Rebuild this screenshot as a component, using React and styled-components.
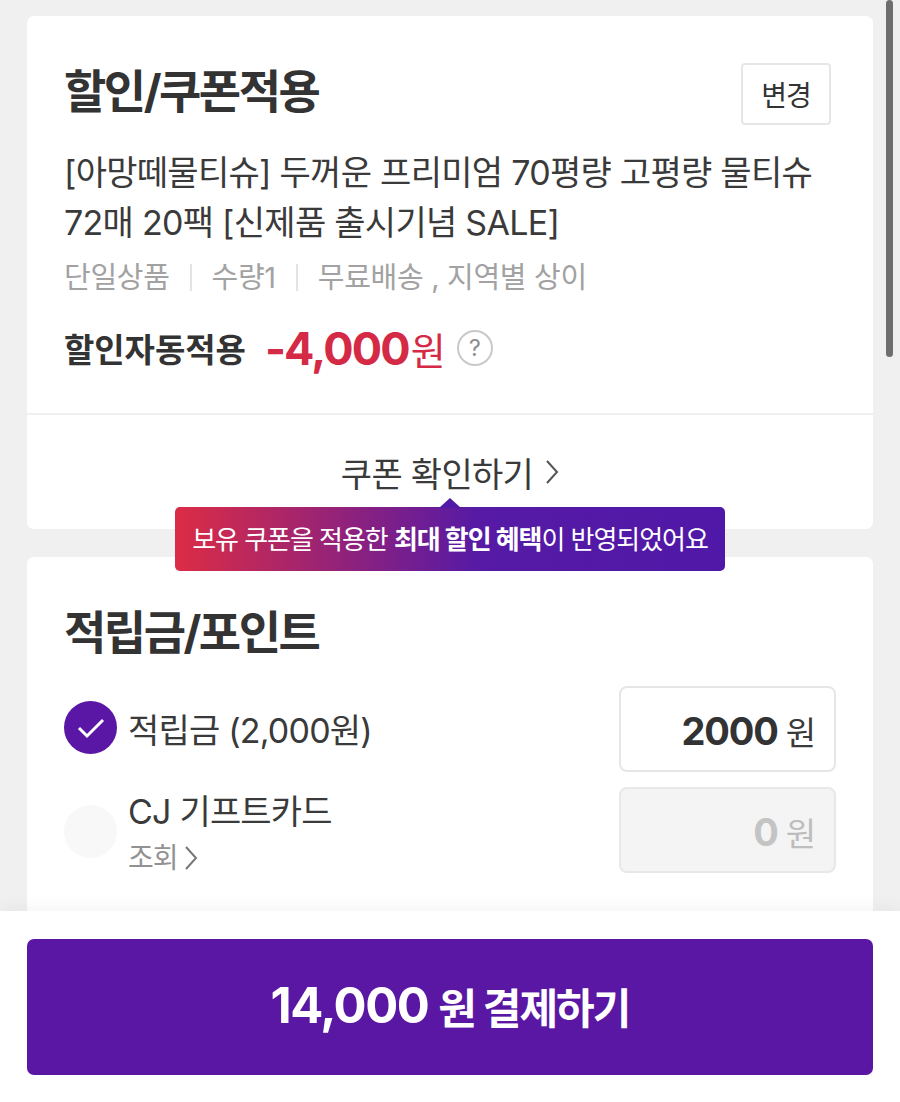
import React from "react";
import styled, { createGlobalStyle } from "styled-components";

const GlobalStyle = createGlobalStyle`
  html, body {
    margin: 0;
    padding: 0;
    background: #f0f0f0;
    overflow: hidden;
  }
  * {
    box-sizing: border-box;
  }
  body {
    font-family: "Inter", "Noto Sans CJK KR", "Noto Sans", sans-serif;
    color: #333;
  }
`;

const Screen = styled.div`
  position: relative;
  width: 900px;
  height: 1102px;
  display: flex;
  flex-direction: column;
  overflow: hidden;
`;
const Scroller = styled.div`
  flex: 1;
  min-height: 0;
  overflow: hidden;
  padding: 16px 27px 0;
  display: flex;
  flex-direction: column;
  gap: 28px;
`;
const ScrollThumb = styled.div`
  position: absolute;
  top: 0;
  right: 7px;
  width: 7px;
  height: 357px;
  border-radius: 4px;
  background: #6e6e6e;
`;
const Card = styled.section`
  position: relative;
  flex-shrink: 0;
  background: #fff;
  border-radius: 7px;
`;
const CardBody = styled.div`
  padding: ${(p) => p.$padding};
`;
const TitleRow = styled.div`
  display: flex;
  justify-content: space-between;
  align-items: flex-start;
`;
const Title = styled.h2`
  margin: 0;
  font-size: 46px;
  line-height: 60px;
  font-weight: 700;
  letter-spacing: -2.5px;
  color: #333;
`;
const ChangeButton = styled.button`
  width: 90px;
  height: 62px;
  margin: 2px 2px 0 0;
  padding: 0;
  background: #fff;
  border: 2px solid #e6e6e6;
  border-radius: 4px;
  font: inherit;
  font-size: 28px;
  letter-spacing: -1px;
  color: #333;
`;
const ProductName = styled.p`
  margin: 23px 0 0;
  font-size: 34px;
  line-height: 50px;
  letter-spacing: -0.72px;
  color: #3a3a3a;
`;
const MetaRow = styled.div`
  display: flex;
  align-items: center;
  margin-top: 4px;
  height: 46px;
  font-size: 29px;
  letter-spacing: -0.3px;
  color: #a2a2a2;
`;
const MetaItem = styled.span`
  & + &::before {
    content: "";
    display: inline-block;
    width: 2px;
    height: 27px;
    margin: 0 20px;
    vertical-align: -3px;
    background: #e4e4e4;
  }
`;
const DiscountRow = styled.div`
  display: flex;
  align-items: center;
  margin-top: 22px;
  height: 56px;
`;
const DiscountLabel = styled.span`
  font-size: 33px;
  font-weight: 700;
  letter-spacing: -0.05px;
  color: #333;
`;
const DiscountValue = styled.span`
  margin-left: 19px;
  font-size: 45px;
  font-weight: 700;
  letter-spacing: -1.8px;
  color: #d42a45;
`;
const DiscountUnit = styled.span`
  margin-left: 2px;
  font-size: 38px;
  font-weight: 400;
`;
const HelpIcon = styled.span`
  display: flex;
  align-items: center;
  justify-content: center;
  width: 36px;
  height: 36px;
  margin-left: 13px;
  border: 2px solid #c9c9c9;
  border-radius: 50%;
  font-size: 23px;
  color: #8c8c8c;
`;
const CouponLink = styled.div`
  display: flex;
  justify-content: center;
  align-items: center;
  gap: 12px;
  height: 116px;
  border-top: 2px solid #f0f0f0;
  font-size: 34px;
  letter-spacing: -0.7px;
  color: #3a3a3a;
`;
const Tooltip = styled.div`
  position: absolute;
  left: 148px;
  top: 491px;
  width: 550px;
  height: 64px;
  display: flex;
  align-items: center;
  justify-content: center;
  padding-bottom: 4px;
  border-radius: 5px;
  background: linear-gradient(90deg, #dc2c45 0%, #561aa5 55%, #5018a8 100%);
  color: #fff;
  font-size: 26px;
  letter-spacing: -1.05px;
  white-space: nowrap;
  z-index: 2;
  &::before {
    content: "";
    position: absolute;
    left: 264px;
    top: -9px;
    border-left: 11px solid transparent;
    border-right: 11px solid transparent;
    border-bottom: 10px solid #511aa6;
  }
  strong {
    font-weight: 700;
  }
`;
const Row = styled.div`
  display: flex;
  align-items: flex-start;
  justify-content: space-between;
  margin-top: ${(p) => p.$top};
`;
const RowLabel = styled.div`
  display: flex;
  align-items: flex-start;
  gap: 11px;
`;
const Radio = styled.span`
  display: flex;
  align-items: center;
  justify-content: center;
  flex-shrink: 0;
  width: 53px;
  height: 53px;
  margin-top: ${(p) => (p.$on ? "15px" : "18px")};
  border-radius: 50%;
  background: ${(p) => (p.$on ? "#5a17a5" : "#f8f8f8")};
`;
const LabelBlock = styled.div`
  margin-top: ${(p) => p.$top};
`;
const LabelText = styled.div`
  font-size: 34px;
  line-height: 48px;
  letter-spacing: -0.8px;
  color: #3a3a3a;
`;
const SubLink = styled.div`
  display: flex;
  align-items: center;
  gap: 6px;
  margin-top: 2px;
  font-size: 28px;
  line-height: 40px;
  letter-spacing: -1px;
  color: #929292;
`;
const AmountBox = styled.div`
  display: flex;
  align-items: baseline;
  justify-content: flex-end;
  gap: 8px;
  width: 217px;
  height: 86px;
  padding: 19px 18px 0 0;
  border: 2px solid ${(p) => (p.$disabled ? "#e8e8e8" : "#e6e6e6")};
  border-radius: 8px;
  background: ${(p) => (p.$disabled ? "#f4f4f4" : "#fff")};
  color: ${(p) => (p.$disabled ? "#c4c4c4" : "#333")};
`;
const AmountValue = styled.span`
  font-size: 38px;
  font-weight: 700;
  letter-spacing: -1.2px;
`;
const AmountUnit = styled.span`
  font-size: 33px;
  color: ${(p) => (p.$disabled ? "#bdbdbd" : "#3a3a3a")};
`;
const Footer = styled.footer`
  flex-shrink: 0;
  height: 191px;
  padding: 28px 27px 0;
  background: #fff;
  box-shadow: 0 -6px 14px rgba(0, 0, 0, 0.035);
  position: relative;
`;
const PayButton = styled.button`
  display: flex;
  align-items: center;
  justify-content: center;
  width: 100%;
  height: 136px;
  padding: 0 0 4px;
  border: 0;
  border-radius: 7px;
  background: #5a17a3;
  color: #fff;
  font: inherit;
  font-size: 42px;
  font-weight: 700;
  letter-spacing: -2px;
`;
const PayAmount = styled.span`
  font-size: 49px;
  letter-spacing: -1.5px;
  margin-right: 10px;
`;

const Chevron = ({ w, h, color }) => (
  <svg width={w} height={h} viewBox="0 0 14 26" fill="none">
    <path d="M2 2l10 11L2 24" stroke={color} strokeWidth="2" />
  </svg>
);

function App() {
  return (
    <Screen>
      <GlobalStyle />
      <Scroller>
        <Card>
          <CardBody $padding="45px 40px 37px 37px">
            <TitleRow>
              <Title>할인/쿠폰적용</Title>
              <ChangeButton>변경</ChangeButton>
            </TitleRow>
            <ProductName>
              [아망떼물티슈] 두꺼운 프리미엄 70평량 고평량 물티슈
              <br />
              72매 20팩 [신제품 출시기념 SALE]
            </ProductName>
            <MetaRow>
              <MetaItem>단일상품</MetaItem>
              <MetaItem>수량1</MetaItem>
              <MetaItem>무료배송 , 지역별 상이</MetaItem>
            </MetaRow>
            <DiscountRow>
              <DiscountLabel>할인자동적용</DiscountLabel>
              <DiscountValue>
                -4,000<DiscountUnit>원</DiscountUnit>
              </DiscountValue>
              <HelpIcon>?</HelpIcon>
            </DiscountRow>
          </CardBody>
          <CouponLink>
            쿠폰 확인하기
            <Chevron w={14} h={26} color="#555" />
          </CouponLink>
          <Tooltip>
            <span>
              보유 쿠폰을 적용한 <strong>최대 할인 혜택</strong>이 반영되었어요
            </span>
          </Tooltip>
        </Card>
        <Card>
          <CardBody $padding="45px 37px 60px 37px">
            <Title>적립금/포인트</Title>
            <Row $top="24px">
              <RowLabel>
                <Radio $on>
                  <svg width="30" height="24" viewBox="0 0 30 24" fill="none">
                    <path d="M3 12l8 8L27 4" stroke="#fff" strokeWidth="3" />
                  </svg>
                </Radio>
                <LabelBlock $top="21px">
                  <LabelText>적립금 (2,000원)</LabelText>
                </LabelBlock>
              </RowLabel>
              <AmountBox>
                <AmountValue>2000</AmountValue>
                <AmountUnit>원</AmountUnit>
              </AmountBox>
            </Row>
            <Row $top="15px">
              <RowLabel>
                <Radio />
                <LabelBlock $top="1px">
                  <LabelText>CJ 기프트카드</LabelText>
                  <SubLink>
                    조회
                    <Chevron w={14} h={26} color="#777" />
                  </SubLink>
                </LabelBlock>
              </RowLabel>
              <AmountBox $disabled>
                <AmountValue>0</AmountValue>
                <AmountUnit $disabled>원</AmountUnit>
              </AmountBox>
            </Row>
          </CardBody>
        </Card>
      </Scroller>
      <Footer>
        <PayButton>
          <PayAmount>14,000</PayAmount> 원 결제하기
        </PayButton>
      </Footer>
      <ScrollThumb />
    </Screen>
  );
}

export default App;
